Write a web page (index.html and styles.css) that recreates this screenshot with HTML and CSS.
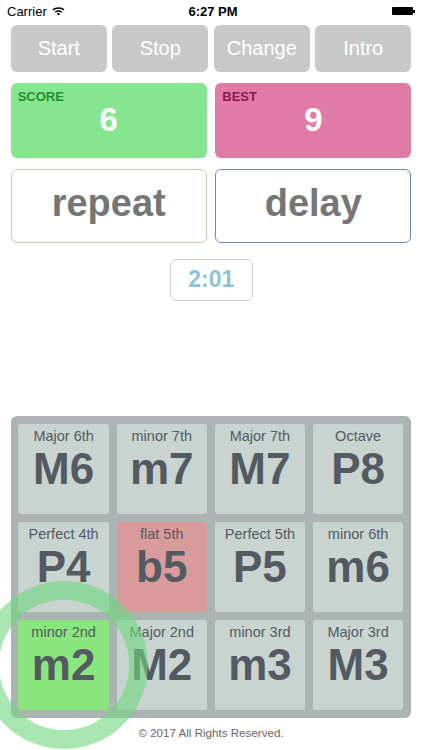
FILE: index.html
```html
<!DOCTYPE html>
<html lang="en">
<head>
    <meta charset="UTF-8">
    <meta name="viewport" content="width=device-width, initial-scale=1.0">
    <title>Intervals</title>
    <link rel="stylesheet" href="styles.css">
</head>
<body>

    <div class="status">
        <div class="carrier">
            Carrier
            <svg class="wifi" width="13" height="10" viewBox="0 0 13 10">
                <path d="M6.5 1.2 C9 1.2 11 2.1 12.5 3.5 L11.4 4.6 C10.2 3.4 8.5 2.7 6.5 2.7 C4.5 2.7 2.8 3.4 1.6 4.6 L0.5 3.5 C2 2.1 4 1.2 6.5 1.2 Z" fill="#000"/>
                <path d="M6.5 4.2 C8 4.2 9.3 4.8 10.3 5.7 L9.2 6.8 C8.5 6.1 7.5 5.7 6.5 5.7 C5.5 5.7 4.5 6.1 3.8 6.8 L2.7 5.7 C3.7 4.8 5 4.2 6.5 4.2 Z" fill="#000"/>
                <path d="M6.5 7.1 C7.1 7.1 7.7 7.4 8.1 7.8 L6.5 9.5 L4.9 7.8 C5.3 7.4 5.9 7.1 6.5 7.1 Z" fill="#000"/>
            </svg>
        </div>
        <div class="clock">6:27 PM</div>
        <div class="battery"><span></span></div>
    </div>

    <div class="page">
        <div class="controls">
            <button class="ctl">Start</button>
            <button class="ctl">Stop</button>
            <button class="ctl">Change</button>
            <button class="ctl">Intro</button>
        </div>

        <div class="scores">
            <div class="score-card score">
                <div class="score-label">SCORE</div>
                <div class="score-value">6</div>
            </div>
            <div class="score-card best">
                <div class="score-label">BEST</div>
                <div class="score-value">9</div>
            </div>
        </div>

        <div class="actions">
            <button class="action repeat">repeat</button>
            <button class="action delay">delay</button>
        </div>

        <div class="timer-row">
            <div class="timer">2:01</div>
        </div>

        <div class="pad">
            <div class="tile"><div class="tile-name">Major 6th</div><div class="tile-code">M6</div></div>
            <div class="tile"><div class="tile-name">minor 7th</div><div class="tile-code">m7</div></div>
            <div class="tile"><div class="tile-name">Major 7th</div><div class="tile-code">M7</div></div>
            <div class="tile"><div class="tile-name">Octave</div><div class="tile-code">P8</div></div>

            <div class="tile"><div class="tile-name">Perfect 4th</div><div class="tile-code">P4</div></div>
            <div class="tile flat"><div class="tile-name">flat 5th</div><div class="tile-code">b5</div></div>
            <div class="tile"><div class="tile-name">Perfect 5th</div><div class="tile-code">P5</div></div>
            <div class="tile"><div class="tile-name">minor 6th</div><div class="tile-code">m6</div></div>

            <div class="tile active">
                <div class="tile-name">minor 2nd</div><div class="tile-code">m2</div>
                <div class="tap-ring"></div>
            </div>
            <div class="tile"><div class="tile-name">Major 2nd</div><div class="tile-code">M2</div></div>
            <div class="tile"><div class="tile-name">minor 3rd</div><div class="tile-code">m3</div></div>
            <div class="tile"><div class="tile-name">Major 3rd</div><div class="tile-code">M3</div></div>
        </div>

        <div class="footer">© 2017 All Rights Reserved.</div>
    </div>

</body>
</html>
```

FILE: styles.css
```css
* {
    margin: 0;
    padding: 0;
    box-sizing: border-box;
    font-family: "Liberation Sans", Arial, sans-serif;
}

body {
    width: 422px;
    height: 750px;
    background: #ffffff;
    overflow: hidden;
}

button {
    border: none;
    background: none;
    cursor: pointer;
}

/* status bar */
.status {
    height: 22px;
    display: grid;
    grid-template-columns: 1fr auto 1fr;
    align-items: center;
    padding: 0 7px;
    font-size: 13px;
    color: #000;
}

.carrier {
    display: flex;
    align-items: center;
    gap: 5px;
}

.clock {
    font-weight: bold;
    padding-left: 4px;
}

.battery {
    justify-self: end;
    width: 23px;
    height: 8px;
    display: flex;
    align-items: center;
}

.battery span {
    display: block;
    width: 21px;
    height: 8px;
    background: #000;
    border-radius: 1px;
}

.battery::after {
    content: "";
    width: 1.5px;
    height: 3px;
    background: #000;
}

/* main */
.page {
    padding: 3px 10.7px 0;
}

.controls {
    display: grid;
    grid-template-columns: repeat(4, 1fr);
    gap: 5.3px;
}

.ctl {
    height: 47px;
    background: #c8c8c8;
    border-radius: 6px;
    color: #ffffff;
    font-size: 20px;
}

.scores {
    margin-top: 10.5px;
    display: grid;
    grid-template-columns: 1fr 1fr;
    gap: 8.6px;
}

.score-card {
    height: 75px;
    border-radius: 6px;
    padding: 7px 7px 0;
}

.score-card.score {
    background: #86e68f;
}

.score-card.best {
    background: #e07aa7;
}

.score-label {
    font-size: 13px;
    font-weight: bold;
    line-height: 14px;
}

.score .score-label {
    color: #1f8f2e;
}

.best .score-label {
    color: #8a1a4b;
}

.score-value {
    text-align: center;
    color: #ffffff;
    font-size: 33px;
    font-weight: bold;
    line-height: 32px;
}

.actions {
    margin-top: 11px;
    display: grid;
    grid-template-columns: 1fr 1fr;
    gap: 8.6px;
}

.action {
    height: 74px;
    border-radius: 6px;
    background: #ffffff;
    color: #767676;
    font-size: 38px;
    font-weight: bold;
    padding-bottom: 4px;
}

.action.repeat {
    border: 1px solid #dcc3ad;
}

.action.delay {
    border: 1px solid #7189b1;
}

.timer-row {
    margin-top: 16px;
    display: flex;
    justify-content: center;
}

.timer {
    width: 83px;
    height: 42px;
    border: 1px solid #cfcfcf;
    border-radius: 6px;
    display: flex;
    align-items: center;
    justify-content: center;
    color: #8fc3d7;
    font-size: 23px;
    font-weight: bold;
    margin-left: 0.5px;
}

/* interval pad */
.pad {
    margin-top: 115.7px;
    background: #abb4b2;
    border-radius: 6px;
    padding: 8px 8px 8px 7.7px;
    display: grid;
    grid-template-columns: repeat(4, 1fr);
    gap: 8px 7.7px;
}

.tile {
    position: relative;
    height: 90px;
    background: #c9d4d1;
    border-radius: 3px;
    text-align: center;
    color: #535a61;
    padding-top: 4px;
}

.tile.flat {
    background: #d99a9b;
}

.tile.active {
    background: #89e57d;
}

.tile-name {
    font-size: 14.5px;
    line-height: 16px;
}

.tile-code {
    font-size: 44px;
    font-weight: bold;
    line-height: 50px;
}

.tap-ring {
    position: absolute;
    left: 50%;
    top: 50%;
    width: 168px;
    height: 168px;
    margin: -84px 0 0 -84px;
    border: 19px solid rgba(110, 215, 125, 0.6);
    border-radius: 50%;
    z-index: 2;
    pointer-events: none;
}

.footer {
    margin-top: 8px;
    text-align: center;
    font-size: 11.6px;
    color: #666666;
    line-height: 14px;
}
```
